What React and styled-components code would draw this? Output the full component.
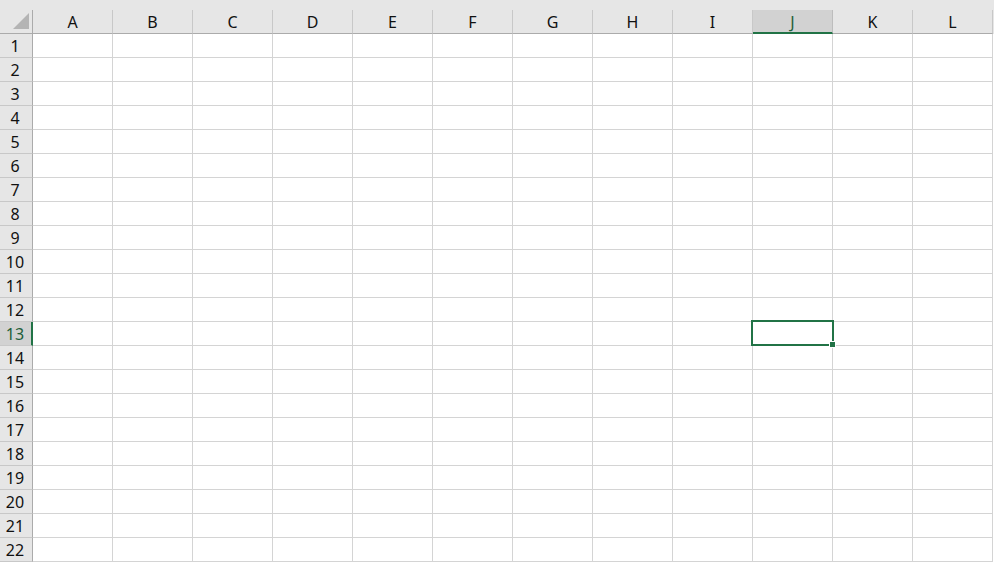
import React from "react";
import styled, { createGlobalStyle } from "styled-components";

const COLS = ["A", "B", "C", "D", "E", "F", "G", "H", "I", "J", "K", "L"];
const ROWS = Array.from({ length: 22 }, (_, i) => i + 1);
const ACTIVE_COL = "J";
const ACTIVE_ROW = 13;

const Global = createGlobalStyle`
  html, body { margin: 0; padding: 0; background: #fff; overflow: hidden; }
  body { font-family: "Noto Sans", "Open Sans", "Liberation Sans", sans-serif; }
`;

const Sheet = styled.div`
  width: 994px;
  height: 562px;
  overflow: hidden;
  background: #fff;
`;

const HeaderRow = styled.div`
  display: flex;
  padding-top: 10px;
  background: #e6e6e6;
`;

const Corner = styled.div`
  flex: 0 0 33px;
  height: 24px;
  box-sizing: border-box;
  border-right: 1px solid #ababab;
  border-bottom: 1px solid #ababab;
  display: flex;
  align-items: flex-end;
  justify-content: flex-end;
  padding: 0 3px 4px 0;
`;

const ColHead = styled.div`
  flex: 0 0 80px;
  height: 24px;
  box-sizing: border-box;
  border-right: 1px solid ${p => (p.$active ? "#bdbdbd" : "#c8c8c8")};
  border-bottom: ${p => (p.$active ? "2px solid #217346" : "1px solid #ababab")};
  background: ${p => (p.$active ? "#d2d2d2" : "#e6e6e6")};
  color: ${p => (p.$active ? "#1e5e3a" : "#111")};
  font-size: 16px;
  line-height: 22px;
  text-align: center;
  padding-top: 1px;
`;

const Row = styled.div`
  display: flex;
  height: 24px;
`;

const RowHead = styled.div`
  flex: 0 0 33px;
  box-sizing: border-box;
  border-right: ${p => (p.$active ? "2px solid #217346" : "1px solid #ababab")};
  border-bottom: 1px solid #c8c8c8;
  background: ${p => (p.$active ? "#d2d2d2" : "#e6e6e6")};
  color: ${p => (p.$active ? "#1e5e3a" : "#111")};
  font-size: 16px;
  line-height: 24px;
  text-align: center;
  padding-right: ${p => (p.$active ? "1px" : "2px")};
`;

const Cell = styled.div`
  flex: 0 0 80px;
  box-sizing: border-box;
  position: relative;
  border-right: 1px solid #d4d4d4;
  border-bottom: 1px solid #d4d4d4;
`;

const Selection = styled.div`
  position: absolute;
  left: -2px;
  top: -2px;
  width: 83px;
  height: 26px;
  box-sizing: border-box;
  border: 2px solid #217346;
  z-index: 2;
`;

const FillHandle = styled.div`
  position: absolute;
  right: -3px;
  bottom: -3px;
  width: 5px;
  height: 5px;
  background: #217346;
  box-shadow: 0 0 0 1px #fff;
`;

function CornerTriangle() {
  return (
    <svg width="16" height="16" viewBox="0 0 16 16">
      <polygon points="16,0 16,16 0,16" fill="#b4b4b4" />
    </svg>
  );
}

export default function App() {
  return (
    <Sheet>
      <Global />
      <HeaderRow>
        <Corner>
          <CornerTriangle />
        </Corner>
        {COLS.map(c => (
          <ColHead key={c} $active={c === ACTIVE_COL}>
            {c}
          </ColHead>
        ))}
      </HeaderRow>
      {ROWS.map(r => (
        <Row key={r}>
          <RowHead $active={r === ACTIVE_ROW}>{r}</RowHead>
          {COLS.map(c => (
            <Cell key={c}>
              {r === ACTIVE_ROW && c === ACTIVE_COL && (
                <Selection>
                  <FillHandle />
                </Selection>
              )}
            </Cell>
          ))}
        </Row>
      ))}
    </Sheet>
  );
}
